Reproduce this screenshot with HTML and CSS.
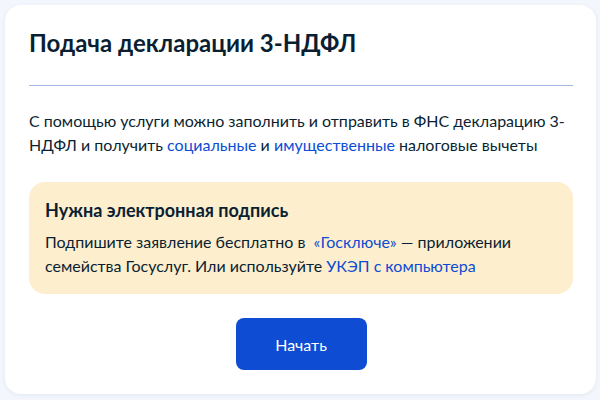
FILE: index.html
```html
<!DOCTYPE html>
<html lang="ru">
<head>
<meta charset="utf-8">
<link rel="stylesheet" href="styles.css">
</head>
<body>
<div class="card">
  <h1 class="title">Подача декларации 3-НДФЛ</h1>
  <hr class="divider">
  <p class="lead">С помощью услуги можно заполнить и отправить в ФНС декларацию 3-НДФЛ и получить <a class="link" href="#">социальные</a> и <a class="link" href="#">имущественные</a> налоговые вычеты</p>
  <div class="notice">
    <div class="notice-title">Нужна электронная подпись</div>
    <p class="notice-text">Подпишите заявление бесплатно в&nbsp; <a class="link" href="#">«Госключе»</a> — приложении семейства Госуслуг. Или используйте <a class="link" href="#">УКЭП с компьютера</a></p>
  </div>
  <div class="actions">
    <button class="btn">Начать</button>
  </div>
</div>
</body>
</html>
```
FILE: styles.css
```css
html, body {
  margin: 0;
  padding: 0;
  background: #f3f6fc;
}
body {
  padding: 5px 4px 6px 5px;
  font-family: Lato, "Noto Sans", sans-serif;
  color: #0b1f33;
}
.card {
  background: #ffffff;
  border-radius: 16px;
  padding: 24px 23px 24px 24px;
  box-shadow: 0 1px 4px rgba(34, 60, 120, 0.08);
}
.title {
  margin: 0 0 28px;
  font-size: 24px;
  line-height: 28px;
  font-weight: 700;
}
.divider {
  margin: 0;
  border: 0;
  height: 1px;
  background: #a7b8e4;
}
.lead {
  margin: 23px 0 25px;
  font-size: 16px;
  line-height: 24px;
}
.link {
  color: #0d4cd3;
  text-decoration: none;
}
.notice {
  background: #fdeecd;
  border-radius: 16px;
  padding: 16px;
}
.notice-title {
  font-size: 18px;
  line-height: 24px;
  font-weight: 700;
}
.notice-text {
  margin: 8px 0 0;
  font-size: 16px;
  line-height: 24px;
}
.actions {
  display: flex;
  justify-content: center;
  margin-top: 24px;
}
.btn {
  width: 131px;
  height: 52px;
  border: 0;
  border-radius: 8px;
  background: #0d4cd3;
  color: #ffffff;
  font-family: Lato, "Noto Sans", sans-serif;
  font-size: 16px;
  cursor: pointer;
}
```
